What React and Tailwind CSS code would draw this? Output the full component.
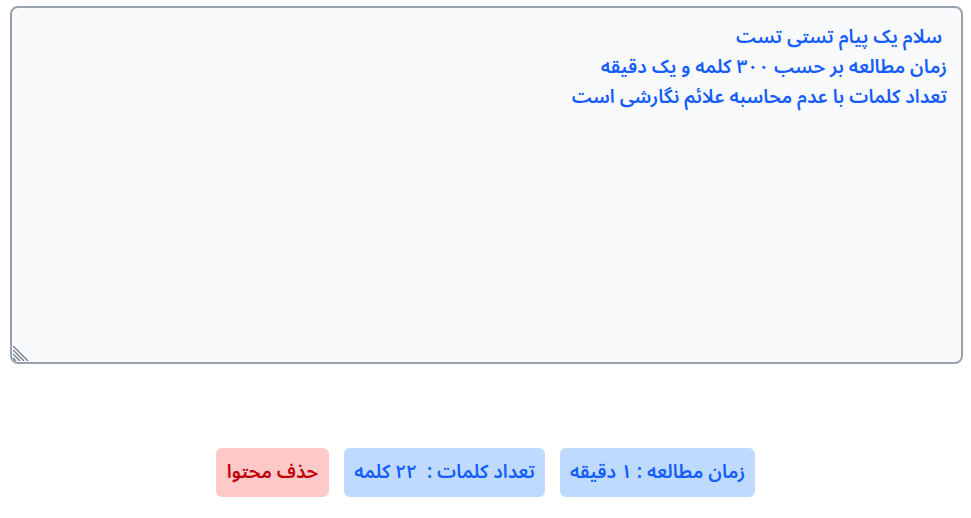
import { useState } from "react";

const initialText =
  " سلام یک پیام تستی تست\nزمان مطالعه بر حسب ۳۰۰ کلمه و یک دقیقه\nتعداد کلمات با عدم محاسبه علائم نگارشی است";

const toPersian = (n) => String(n).replace(/\d/g, (d) => "۰۱۲۳۴۵۶۷۸۹"[d]);

function App() {
  const [text, setText] = useState(initialText);

  const words = text.trim() ? text.trim().split(/\s+/).length : 0;
  const minutes = Math.max(1, Math.ceil(words / 300));

  return (
    <div dir="rtl" className="w-full font-['Noto_Sans_Arabic','Noto_Sans',sans-serif]">
      <div className="pt-[6px] pl-[10px] pr-[8px]">
        <div className="relative">
          <textarea
            value={text}
            onChange={(e) => setText(e.target.value)}
            className="block w-full h-[358px] resize-none bg-gray-50 border-2 border-gray-400 rounded-lg px-[14px] py-[14px] text-[19px] leading-[30px] font-semibold text-blue-600 outline-none"
          />
          {/* resize grip */}
          <svg
            className="absolute left-[3px] bottom-[3px] pointer-events-none"
            width="18"
            height="16"
            viewBox="0 0 18 16"
          >
            <g stroke="#6b7280" strokeWidth="1.2">
              <line x1="0" y1="1" x2="15" y2="16" />
              <line x1="0" y1="5" x2="11" y2="16" />
              <line x1="0" y1="9" x2="7" y2="16" />
              <line x1="0" y1="13" x2="3" y2="16" />
            </g>
          </svg>
        </div>
      </div>
      <div className="flex justify-center gap-[15px] mt-[84px]">
        <button className="h-[49px] px-[10px] rounded-md bg-blue-200 text-blue-600 text-[19px] font-semibold">
          زمان مطالعه : {toPersian(minutes)} دقیقه
        </button>
        <button className="h-[49px] px-[10px] rounded-md bg-blue-200 text-blue-600 text-[19px] font-semibold">
          تعداد کلمات :&nbsp; {toPersian(words)} کلمه
        </button>
        <button
          onClick={() => setText("")}
          className="h-[49px] px-[11px] rounded-md bg-red-200 text-red-700 text-[19px] font-semibold"
        >
          حذف محتوا
        </button>
      </div>
    </div>
  );
}

export default App;
